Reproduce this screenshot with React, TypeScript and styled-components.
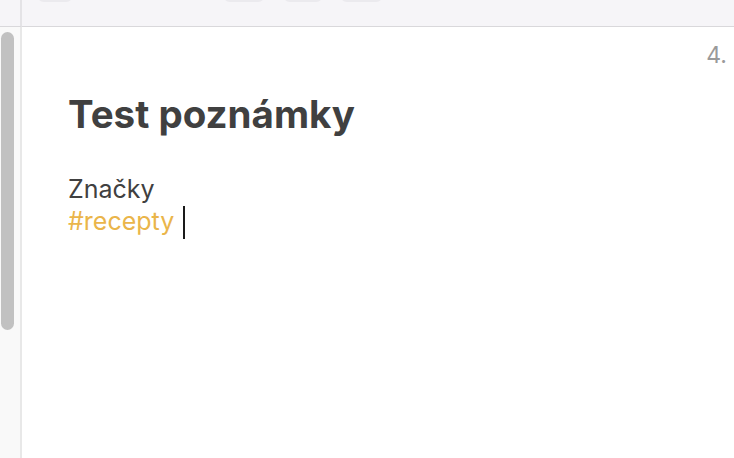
import React from 'react';
import styled, { createGlobalStyle } from 'styled-components';

const GlobalStyle = createGlobalStyle`
  html, body {
    margin: 0;
    padding: 0;
    background: #ffffff;
    overflow: hidden;
  }
  #root {
    width: 734px;
    height: 458px;
  }
`;

const Window = styled.div`
  width: 734px;
  height: 458px;
  display: grid;
  grid-template-columns: 22px 1fr;
  grid-template-rows: 27px 1fr;
  font-family: Inter, 'Noto Sans', sans-serif;
  background: #ffffff;
`;

const SideTop = styled.div`
  background: #f6f5f8;
  border-right: 2px solid #e4e3e6;
  border-bottom: 1px solid #d9d8db;
`;

const Toolbar = styled.div`
  background: #f6f5f8;
  border-bottom: 1px solid #d9d8db;
  position: relative;
`;

const ToolButton = styled.div<{ left: number; width: number }>`
  position: absolute;
  top: -20px;
  left: ${(p) => p.left}px;
  width: ${(p) => p.width}px;
  height: 22px;
  border-radius: 7px;
  background: #ebeaee;
`;

const SideStrip = styled.div`
  background: #f9f9f9;
  border-right: 2px solid #e8e8e8;
  padding: 5px 0 0 1px;
`;

const ScrollThumb = styled.div`
  width: 13px;
  height: 298px;
  border-radius: 7px;
  background: #c1c1c1;
`;

const Editor = styled.div`
  position: relative;
  padding: 63px 0 0 46px;
  color: #404040;
`;

const PageNumber = styled.div`
  position: absolute;
  top: 14px;
  right: 7px;
  font-size: 23px;
  line-height: 28px;
  color: #9a9a9a;
`;

const Title = styled.h1`
  margin: 0 0 35px;
  font-size: 38.5px;
  font-weight: 700;
  line-height: 48px;
  color: #404040;
`;

const Line = styled.div`
  font-size: 25px;
  line-height: 32px;
  display: flex;
  align-items: flex-start;
`;

const Tag = styled.span`
  color: #eab54a;
`;

const Caret = styled.span`
  width: 2px;
  height: 33px;
  margin: 1px 0 -2px 9px;
  background: #1a1a1a;
`;

export default function App() {
  return (
    <>
      <GlobalStyle />
      <Window>
        <SideTop />
        <Toolbar>
          <ToolButton left={15} width={36} />
          <ToolButton left={201} width={42} />
          <ToolButton left={261} width={40} />
          <ToolButton left={318} width={43} />
        </Toolbar>
        <SideStrip>
          <ScrollThumb />
        </SideStrip>
        <Editor>
          <PageNumber>4.</PageNumber>
          <Title>Test poznámky</Title>
          <Line>Značky</Line>
          <Line>
            <Tag>#recepty</Tag>
            <Caret />
          </Line>
        </Editor>
      </Window>
    </>
  );
}
